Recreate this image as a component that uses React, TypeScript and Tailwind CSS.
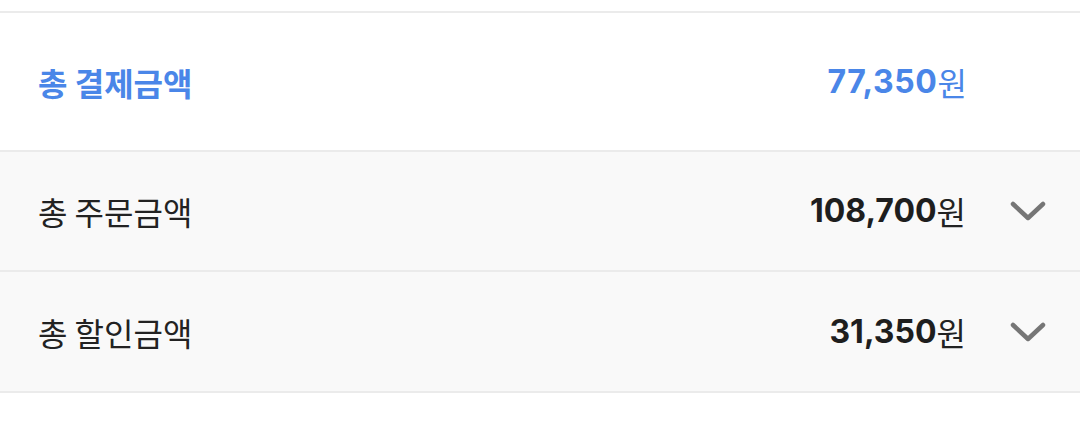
import React from "react";

const kr = { fontFamily: '"Noto Sans CJK KR", "Noto Sans", sans-serif' };
const num = { fontFamily: '"Inter", "Noto Sans CJK KR", sans-serif' };

function Chevron() {
  return (
    <svg width="36" height="24" viewBox="0 0 36 24" className="shrink-0">
      <path d="M3 5 L18 19 L33 5" fill="none" stroke="#767676" strokeWidth="4.5" strokeLinecap="round" strokeLinejoin="round" />
    </svg>
  );
}

function Row({ label, amount, h }: { label: string; amount: string; h: string }) {
  return (
    <div className={`flex items-center ${h} bg-[#f9f9f9] border-b-2 border-[#ebebeb] pl-[38px] pr-[34px]`}>
      <span className="text-[32px] text-[#222]" style={kr}>{label}</span>
      <div className="ml-auto flex items-center">
        <span className="text-[32px] font-bold text-[#1e1e1e] tracking-[0px]" style={num}>{amount}</span>
        <span className="text-[32px] text-[#222]" style={kr}>원</span>
        <div className="ml-[44px] flex items-center"><Chevron /></div>
      </div>
    </div>
  );
}

export default function App() {
  return (
    <div className="w-[1080px] h-[429px] bg-white overflow-hidden">
      <div className="h-[11px]" />
      <div className="border-t-2 border-[#ebebeb]">
        <div className="flex items-center h-[139px] bg-white border-b-2 border-[#ebebeb] pl-[38px] pr-[113px]">
          <span className="text-[32px] font-bold text-[#4a86e8]" style={kr}>총 결제금액</span>
          <div className="ml-auto flex items-center">
            <span className="text-[32px] font-bold text-[#4a86e8] tracking-[0.6px]" style={num}>77,350</span>
            <span className="text-[32px] text-[#4a86e8]" style={kr}>원</span>
          </div>
        </div>
        <Row label="총 주문금액" amount="108,700" h="h-[120px]" />
        <Row label="총 할인금액" amount="31,350" h="h-[121px]" />
      </div>
    </div>
  );
}
